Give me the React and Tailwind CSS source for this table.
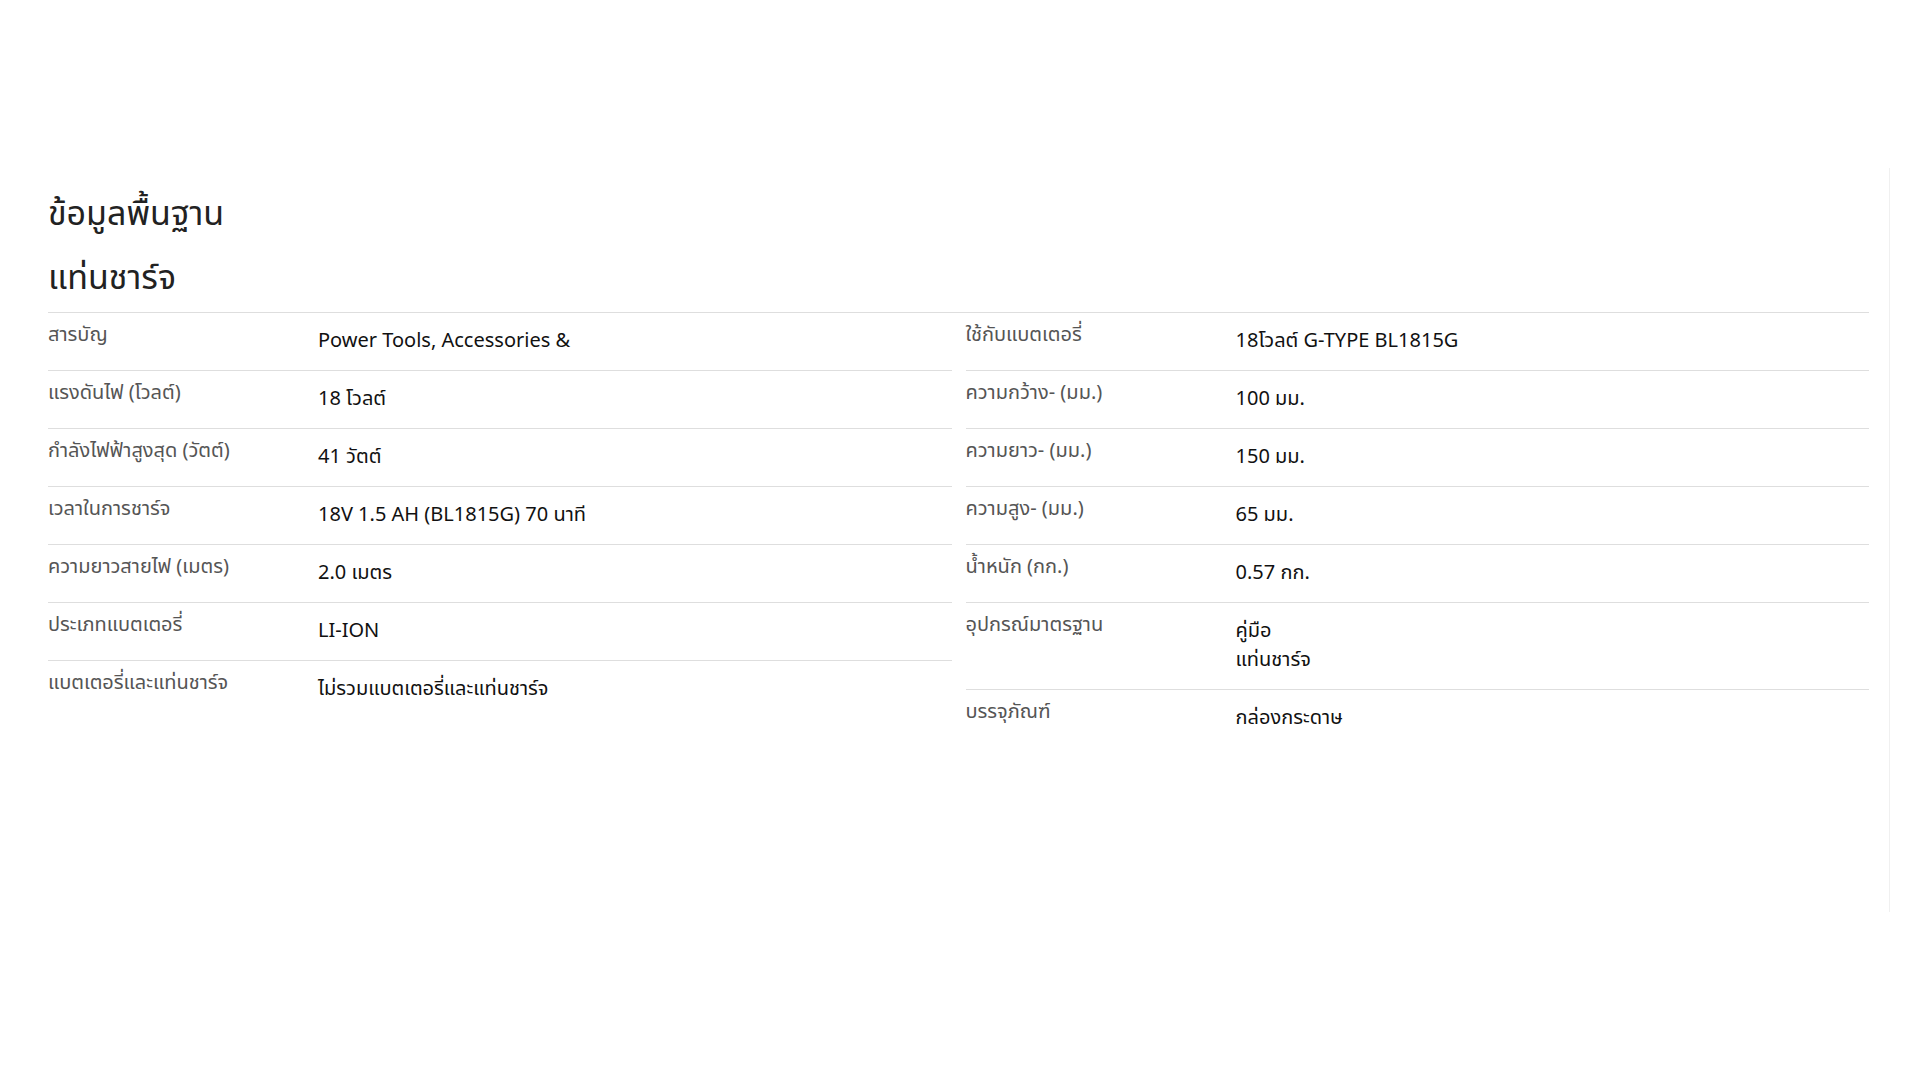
import React from 'react';

const leftRows = [
  { label: 'สารบัญ', value: ['Power Tools, Accessories &'] },
  { label: 'แรงดันไฟ (โวลต์)', value: ['18 โวลต์'] },
  { label: 'กำลังไฟฟ้าสูงสุด (วัตต์)', value: ['41 วัตต์'] },
  { label: 'เวลาในการชาร์จ', value: ['18V 1.5 AH (BL1815G) 70 นาที'] },
  { label: 'ความยาวสายไฟ (เมตร)', value: ['2.0 เมตร'] },
  { label: 'ประเภทแบตเตอรี่', value: ['LI-ION'] },
  { label: 'แบตเตอรี่และแท่นชาร์จ', value: ['ไม่รวมแบตเตอรี่และแท่นชาร์จ'] },
];

const rightRows = [
  { label: 'ใช้กับแบตเตอรี่', value: ['18โวลต์ G-TYPE BL1815G'] },
  { label: 'ความกว้าง- (มม.)', value: ['100 มม.'] },
  { label: 'ความยาว- (มม.)', value: ['150 มม.'] },
  { label: 'ความสูง- (มม.)', value: ['65 มม.'] },
  { label: 'น้ำหนัก (กก.)', value: ['0.57 กก.'] },
  { label: 'อุปกรณ์มาตรฐาน', value: ['คู่มือ', 'แท่นชาร์จ'] },
  { label: 'บรรจุภัณฑ์', value: ['กล่องกระดาษ'] },
];

const SpecTable = ({ rows }) => (
  <div className="flex flex-col">
    {rows.map((row, i) => (
      <div
        key={row.label}
        className={`flex pt-[12px] pb-[14px] ${i < rows.length - 1 ? 'border-b border-[#dedede]' : ''}`}
      >
        <div className="w-[270px] shrink-0 text-[20px] leading-[20px] text-[#555555]">{row.label}</div>
        <div className="flex-1 flex flex-col pt-[2px] text-[20px] leading-[29px] text-[#111111]">
          {row.value.map((v) => (
            <span key={v}>{v}</span>
          ))}
        </div>
      </div>
    ))}
  </div>
);

export default function App() {
  return (
    <div
      className="w-[1920px] h-[1080px] bg-white overflow-hidden"
      style={{ fontFamily: '"Noto Sans Thai", "Noto Sans", "DejaVu Sans", sans-serif' }}
    >
      <div className="mt-[168px] w-[1890px] h-[744px] border-r border-[#f0f0f0] pt-[15px] pl-[48px] pr-[20px]">
        <h2 className="text-[34px] leading-[64px] text-[#222222]">ข้อมูลพื้นฐาน</h2>
        <h2 className="text-[34px] leading-[64px] text-[#222222]">แท่นชาร์จ</h2>
        <div className="mt-[1px] grid grid-cols-2 gap-x-[14px] border-t border-[#dedede]">
          <SpecTable rows={leftRows} />
          <SpecTable rows={rightRows} />
        </div>
      </div>
    </div>
  );
}
